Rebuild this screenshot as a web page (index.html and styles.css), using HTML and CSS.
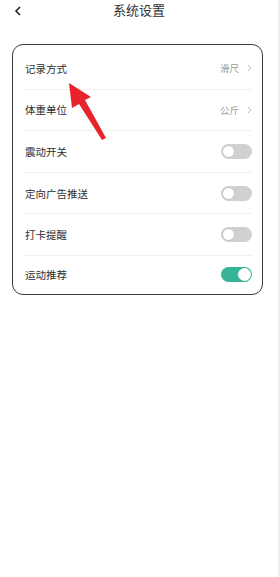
FILE: index.html
```
<!DOCTYPE html>
<html lang="zh-CN">

<head>
    <meta charset="UTF-8">
    <meta name="viewport" content="width=device-width, initial-scale=1.0">
    <title>系统设置</title>
    <link rel="stylesheet" href="styles.css">
</head>

<body>
    <div class="page">
        <!-- 상단바 -->
        <header class="topbar">
            <button class="back">
                <svg width="8" height="10" viewBox="0 0 8 10">
                    <path d="M6 1 L2 5 L6 9" fill="none" stroke="#222" stroke-width="1.6" />
                </svg>
            </button>
            <h1 class="title">系统设置</h1>
        </header>

        <!-- 설정목록 -->
        <ul class="card">
            <li class="row">
                <span class="label">记录方式</span>
                <span class="value">滑尺
                    <svg class="chev" width="5" height="8" viewBox="0 0 5 8">
                        <path d="M1 1 L4 4 L1 7" fill="none" stroke="#bbb" stroke-width="1" />
                    </svg>
                </span>
            </li>
            <li class="row">
                <span class="label">体重单位</span>
                <span class="value">公斤
                    <svg class="chev" width="5" height="8" viewBox="0 0 5 8">
                        <path d="M1 1 L4 4 L1 7" fill="none" stroke="#bbb" stroke-width="1" />
                    </svg>
                </span>
            </li>
            <li class="row">
                <span class="label">震动开关</span>
                <span class="switch"></span>
            </li>
            <li class="row">
                <span class="label">定向广告推送</span>
                <span class="switch"></span>
            </li>
            <li class="row">
                <span class="label">打卡提醒</span>
                <span class="switch"></span>
            </li>
            <li class="row">
                <span class="label">运动推荐</span>
                <span class="switch on"></span>
            </li>
        </ul>

        <!-- 빨간 화살표 표시 -->
        <svg class="mark" width="280" height="160" viewBox="0 0 280 160">
            <polygon points="69,83 91,97 85,100 106,138 102,140 79,104 72,108" fill="#e8232b" />
        </svg>
    </div>
</body>

</html>
```

FILE: styles.css
```
html,
body {
    margin: 0;
    padding: 0;
}

body {
    background-color: #fff;
    font-family: "Noto Sans CJK SC", "Noto Sans", sans-serif;
    color: #333;
}

ul {
    margin: 0;
    padding: 0;
    list-style: none;
}

/* 전체 */
.page {
    position: relative;
    width: 278px;
    min-height: 577px;
    border-right: 2px solid #efefef;
}

/* 상단바 */
.topbar {
    position: relative;
    height: 19px;
    display: flex;
    align-items: center;
    justify-content: center;
}

.back {
    position: absolute;
    left: 13px;
    top: 4px;
    padding: 0;
    border: 0;
    background: none;
    width: 10px;
    height: 11px;
}

.title {
    margin: 0;
    font-size: 13px;
    font-weight: normal;
    color: #333;
    line-height: 19px;
}

/* 카드 */
.card {
    margin: 25px 15px 0 12px;
    padding: 3px 10px 0 11px;
    border: 1px solid #3a3a3a;
    border-radius: 11px;
}

.row {
    height: 40.6px;
    display: flex;
    align-items: center;
    justify-content: space-between;
    border-bottom: 1px solid #f0f0f0;
}

.row:last-child {
    height: 38px;
    border-bottom: 0;
}

.label {
    font-size: 10.5px;
    color: #2e2e2e;
    padding-left: 1px;
}

.value {
    font-size: 9.5px;
    color: #999;
    display: flex;
    align-items: center;
    gap: 8px;
}

.chev {
    display: block;
}

/* 토글 */
.switch {
    position: relative;
    width: 31px;
    height: 15px;
    border-radius: 8px;
    background-color: #d0d0d0;
}

.switch::before {
    content: '';
    position: absolute;
    top: 1px;
    left: 1px;
    width: 11px;
    height: 11px;
    border-radius: 50%;
    background-color: #fff;
    border: 1px solid #c4c4c4;
}

.switch.on {
    background-color: #35b496;
}

.switch.on::before {
    left: auto;
    right: 1px;
    border-color: #fff;
}

/* 화살표 */
.mark {
    position: absolute;
    top: 0;
    left: 0;
    pointer-events: none;
}
```
